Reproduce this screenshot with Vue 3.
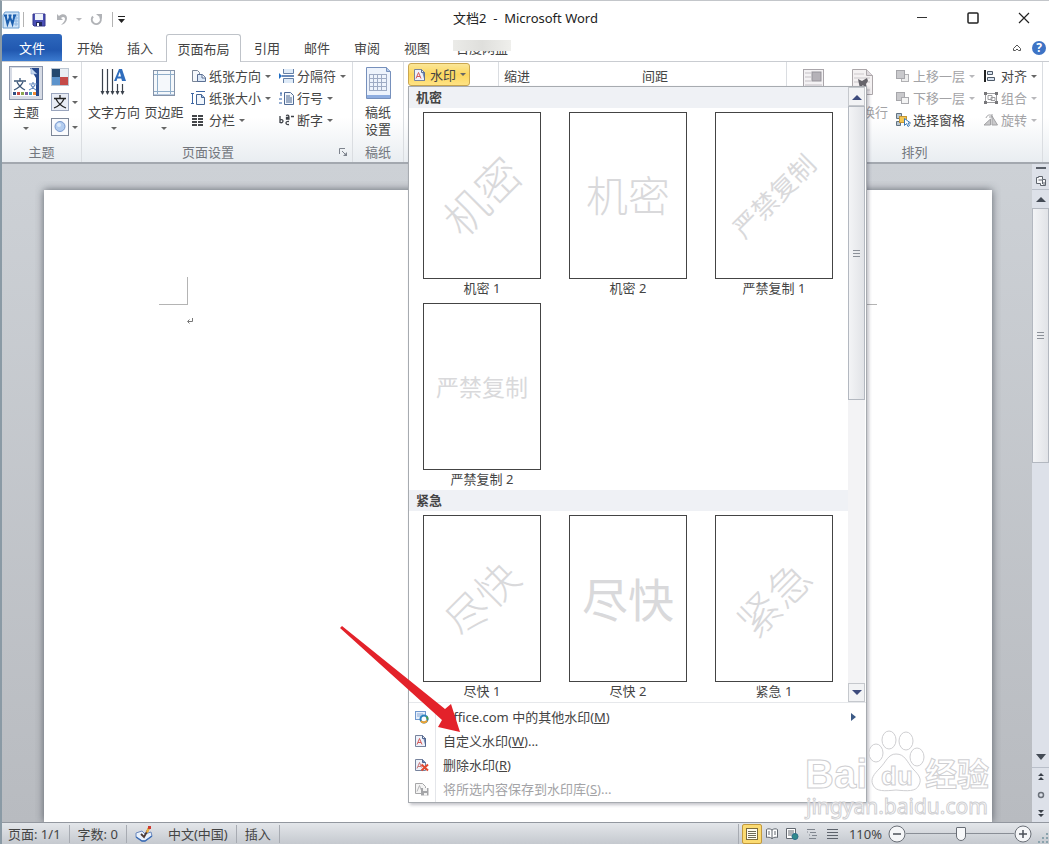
<script setup>
import { ref } from 'vue'

const zoom = ref(51)

const tabsBefore = ['开始', '插入']
const tabsAfter = ['引用', '邮件', '审阅', '视图']

const sections = [
  {
    title: '机密',
    items: [
      { name: '机密 1', text: '机密', kind: 'wide diagonal' },
      { name: '机密 2', text: '机密', kind: 'wide' },
      { name: '严禁复制 1', text: '严禁复制', kind: 'long diagonal' },
      { name: '严禁复制 2', text: '严禁复制', kind: 'long' },
    ],
  },
  {
    title: '紧急',
    items: [
      { name: '尽快 1', text: '尽快', kind: 'short diagonal' },
      { name: '尽快 2', text: '尽快', kind: 'tall' },
      { name: '紧急 1', text: '紧急', kind: 'short diagonal' },
    ],
  },
]
</script>

<template>
  <div class="window">
    <header class="titlebar">
      <div class="quick">
        <button class="plain" aria-label="Word">
          <svg width="18" height="18" viewBox="0 0 18 18">
            <path d="M3 1h14v16H1V4z" fill="#cfe3f7" stroke="#6f9fd0" />
            <path d="M14 3v12M12 4h4M12 7h4M12 10h4M12 13h4" stroke="#8db7e4" />
            <path d="M2 4.500h3M6.500 4.500h3M11 4.500h3M3.500 4.500L5.500 13 8 6l2.500 7 2-8.500" fill="none" stroke="#1d5fae" stroke-width="2" />
          </svg>
        </button>
        <i class="bar"></i>
        <button class="plain save" aria-label="保存">
          <svg width="14" height="14" viewBox="0 0 14 14">
            <path d="M1 1h12v12H2l-1-1z" fill="#4a4fb5" stroke="#34378c" />
            <rect x="3" y="1" width="8" height="6" fill="#eef3fb" />
            <rect x="4" y="9" width="6" height="4" fill="#222a5c" />
            <rect x="5" y="10" width="2" height="3" fill="#fff" />
          </svg>
        </button>
        <button class="plain undo" aria-label="撤消">
          <svg width="12" height="14" viewBox="0 0 12 14">
            <path d="M1 1v6h6L5 5c2-2 4-1 4 1 0 2-2 4-4 6 4-1 6-4 6-7 0-4-5-5-8-2z" fill="#b1b3b7" />
          </svg>
        </button>
        <i class="caret faint"></i>
        <button class="plain redo" aria-label="恢复">
          <svg width="13" height="13" viewBox="0 0 13 13">
            <path d="M3 3.500a4.500 4.500 0 1 0 7 .5" fill="none" stroke="#b1b3b7" stroke-width="2" />
            <path d="M6 1h6v5z" fill="#b1b3b7" />
          </svg>
        </button>
        <i class="bar"></i>
        <button class="plain more" aria-label="自定义快速访问工具栏">
          <svg width="7" height="8" viewBox="0 0 7 8"><path d="M0 0h7v1H0zM0 3h7L3.500 7z" fill="#222" /></svg>
        </button>
      </div>
      <div class="title">文档2&nbsp; -&nbsp; Microsoft Word</div>
      <div class="controls">
        <button aria-label="最小化"><svg width="12" height="12"><path d="M1 5.500h10" stroke="#333" stroke-width="1" /></svg></button>
        <button aria-label="最大化"><svg width="12" height="12"><rect x="1" y="1" width="10" height="10" rx="1" fill="none" stroke="#222" stroke-width="1.500" /></svg></button>
        <button aria-label="关闭"><svg width="12" height="12"><path d="M1 1l10 10M11 1L1 11" stroke="#222" stroke-width="1.200" /></svg></button>
      </div>
    </header>

    <nav class="tabs">
      <button class="file">文件</button>
      <button v-for="t in tabsBefore" :key="t" class="tab">{{ t }}</button>
      <button class="tab active">页面布局</button>
      <button v-for="t in tabsAfter" :key="t" class="tab">{{ t }}</button>
      <button class="tab covered">百度网盘</button>
      <span class="spring"></span>
      <button class="plain collapse" aria-label="功能区最小化">
        <svg width="10" height="8" viewBox="0 0 10 8"><path d="M1.500 4.500L5 1l3.500 3.500v2h-2L5 5 3.500 6.500h-2z" fill="#fff" stroke="#555" /></svg>
      </button>
      <button class="help" aria-label="帮助">?</button>
    </nav>

    <section class="ribbon">
      <div class="group theme">
        <div class="body">
          <button class="big w36">
            <svg width="34" height="34" viewBox="0 0 34 34">
              <rect x=".5" y=".5" width="33" height="33" fill="#d6dbe5" stroke="#8e98ac" />
              <rect x="3" y="2" width="25" height="28" fill="#fff" />
              <path d="M21 2h9v28h-3V12z" fill="#24478c" />
              <path d="M22 2l6 6h-6z" fill="#c5d7ef" stroke="#7b97c4" stroke-width=".5" />
              <path d="M11 12v3M5 15h12M8 16c2 4 4 6 8 8M14 16c-2 4-4 6-9 8" stroke="#3a5577" stroke-width="1.300" fill="none" />
              <path d="M24 16v2M20 18h8M22 19c1 2 3 4 5 5M26 19c-1 2-3 4-6 5" stroke="#5f86bd" stroke-width="1.200" fill="none" />
              <path d="M4 26h3v3H4z" fill="#304e83" /><path d="M8 26h3v3H8z" fill="#c44b43" />
              <path d="M12 26h3v3h-3z" fill="#8aa64f" /><path d="M16 26h3v3h-3z" fill="#7a5da0" />
              <path d="M20 26h3v3h-3z" fill="#3e9bb8" /><path d="M24 26h3v3h-3z" fill="#ef8b35" />
            </svg>
            <span>主题</span><i class="caret"></i>
          </button>
          <div class="stack">
            <button class="mini" aria-label="主题颜色">
              <svg width="18" height="18" viewBox="0 0 18 18"><rect width="18" height="18" fill="#bcc6d2" /><path d="M1 1h8v8H1z" fill="#24486f" /><path d="M9 1h8v8H9z" fill="#e9eef3" /><path d="M1 9h8v8H1z" fill="#5c93cc" /><path d="M9 9h8v8H9z" fill="#c54a48" /></svg>
              <i class="caret"></i>
            </button>
            <button class="mini" aria-label="主题字体">
              <svg width="18" height="18" viewBox="0 0 18 18"><rect x=".5" y=".5" width="17" height="17" fill="#e8ecf5" stroke="#9aa5bd" /><path d="M9 2v3M3 5.500h12M5 6c2 4 5 7 10 9M13 6c-2 4-5 7-10 9" stroke="#222" stroke-width="1.300" fill="none" /></svg>
              <i class="caret"></i>
            </button>
            <button class="mini" aria-label="主题效果">
              <svg width="18" height="18" viewBox="0 0 18 18"><rect x=".5" y=".5" width="17" height="17" fill="#fafbfd" stroke="#7d8798" /><circle cx="9" cy="8.500" r="5" fill="#b3cdf0" stroke="#7798ce" /><circle cx="8" cy="7" r="2" fill="#deebfb" /></svg>
              <i class="caret"></i>
            </button>
          </div>
        </div>
        <div class="name">主题</div>
      </div>

      <div class="group setup">
        <div class="body">
          <button class="big w56">
            <svg width="34" height="34" viewBox="0 0 34 34">
              <path d="M5.500 3v25M10.500 3v25M15.500 3v25M20.500 18v10M25.500 18v10" stroke="#3b424c" stroke-width="1.200" />
              <path d="M3.500 25l2 4 2-4zM8.500 25l2 4 2-4zM13.500 25l2 4 2-4zM18.500 25l2 4 2-4zM23.500 25l2 4 2-4z" fill="#3b424c" />
              <path d="M17 15L22 3h3l4 12h-4l-.7-2.500h-4L19.500 15zM21 10.500h3L22.800 6z" fill="#2f6dbd" fill-rule="evenodd" />
            </svg>
            <span>文字方向</span><i class="caret"></i>
          </button>
          <button class="big w44">
            <svg width="34" height="34" viewBox="0 0 34 34">
              <rect x="6.500" y="4.500" width="21" height="25" fill="#f5f8fb" stroke="#8593a8" />
              <path d="M10.500 5v24M23.500 5v24M7 8.500h20M7 25.500h20" stroke="#8fadc9" />
              <path d="M7 28h20v1H7z" fill="#b5c8df" />
            </svg>
            <span>页边距</span><i class="caret"></i>
          </button>
          <div class="rows">
            <button class="row">
              <svg width="16" height="14" viewBox="0 0 16 14"><path d="M1.500 1.500h5l2 2v9h-7z" fill="#f4f7fb" stroke="#7a8698" /><path d="M6.500 5.500h5l3 3v4h-8z" fill="#dce8f7" stroke="#5a6f93" /><path d="M11 5.500V9h3.500" fill="#fff" stroke="#5a6f93" /></svg>
              纸张方向<i class="caret"></i>
            </button>
            <button class="row">
              <svg width="16" height="14" viewBox="0 0 16 14"><path d="M1.500 2v11M0 2.500h3M0 12.500h3M5 .5h9" stroke="#3d67a5" /><path d="M5.500 3.500h5l3 3v7h-8z" fill="#f1f6fc" stroke="#466694" /><path d="M10.500 3.500v3h3" fill="#9fbbe3" stroke="#466694" /></svg>
              纸张大小<i class="caret"></i>
            </button>
            <button class="row">
              <svg width="16" height="14" viewBox="0 0 16 14"><path d="M1 3h5M7 3h5M1 6h5M7 6h5M1 9h5M7 9h5M1 12h5M7 12h5" stroke="#44464a" stroke-width="2" /></svg>
              分栏<i class="caret"></i>
            </button>
          </div>
          <div class="rows">
            <button class="row">
              <svg width="16" height="14" viewBox="0 0 16 14"><path d="M4.500 0v4.500h10V0M4.500 14V9.500h10V14" fill="#dfebf8" stroke="#6580a6" /><path d="M3 7h12" stroke="#27579b" stroke-width="1.400" /><path d="M0 4l3 3-3 3z" fill="#1f6dc4" /></svg>
              分隔符<i class="caret"></i>
            </button>
            <button class="row">
              <svg width="16" height="14" viewBox="0 0 16 14"><path d="M1 2h2M2 2v3M0 8h3M0 12h3" stroke="#2f5ea6" /><path d="M5.500 1.500h6l3 3v9h-9z" fill="#f3f7fc" stroke="#506b96" /><path d="M7 5h4M7 7h6M7 9h6M7 11h6" stroke="#49658f" /></svg>
              行号<i class="caret"></i>
            </button>
            <button class="row">
              <svg width="16" height="14" viewBox="0 0 16 14"><path d="M1 3v7M1 7c4-2 4 4 0 2.500M7 2.500c3-1 3 0 3 3.500H7.500V4.500H10M12 3.500h3M10 8.500c-4-1-4 4 0 3" fill="none" stroke="#3d4147" stroke-width="1.300" /></svg>
              断字<i class="caret"></i>
            </button>
          </div>
        </div>
        <div class="name">页面设置</div>
        <button class="plain launcher" aria-label="页面设置对话框">
          <svg width="9" height="9" viewBox="0 0 9 9"><path d="M.5 6V.5H6M3 3l4 4" fill="none" stroke="#7d838d" /><path d="M8 4v4H4z" fill="#7d838d" /></svg>
        </button>
      </div>

      <div class="group paper">
        <div class="body">
          <button class="big w44">
            <svg width="34" height="34" viewBox="0 0 34 34">
              <path d="M5.500 1.500h20l4 4v27h-24z" fill="#edf3fc" stroke="#7690bc" />
              <path d="M25.500 1.500v4h4" fill="#b4caea" stroke="#7690bc" />
              <path d="M8 8.500h18M8 12.500h18M8 16.500h18M8 20.500h18M8 24.500h18M8.500 8v17M12.500 8v17M16.500 8v17M20.500 8v17M25.500 8v17" stroke="#9eabc4" />
              <path d="M6 29h23v3H6z" fill="#8eade0" />
            </svg>
            <span>稿纸<br />设置</span>
          </button>
        </div>
        <div class="name">稿纸</div>
      </div>

      <div class="group background">
        <div class="anchor">
          <button class="mark" aria-haspopup="true" aria-expanded="true">
            <svg width="12" height="14" viewBox="0 0 12 14"><path d="M.5 1.500h7l3 3v8H.5z" fill="#eef2fa" stroke="#77839d" /><path d="M7.500 1.500v3h3v8" fill="#7189b4" stroke="#5f7194" /><path d="M2 10.500l2.500-6 2.500 6M3 8.500h3" fill="none" stroke="#d45a58" /></svg>
            水印<i class="caret"></i>
          </button>

          <div class="popup">
            <div class="gallery">
              <div class="list">
                <section v-for="s in sections" :key="s.title">
                  <h3>{{ s.title }}</h3>
                  <div class="tiles">
                    <button v-for="i in s.items" :key="i.name" class="tile">
                      <span class="sheet"><span :class="i.kind">{{ i.text }}</span></span>
                      <span class="label">{{ i.name }}</span>
                    </button>
                  </div>
                </section>
              </div>
              <div class="scroll">
                <button aria-label="向上滚动"><svg width="10" height="6"><path d="M0 6l5-5 5 5z" fill="#3c4a7c" /></svg></button>
                <div class="thumb"><i class="grip"></i></div>
                <span class="spring"></span>
                <button aria-label="向下滚动"><svg width="10" height="6"><path d="M0 0h10L5 5z" fill="#3c4a7c" /></svg></button>
              </div>
            </div>
            <div class="menu">
              <button>
                <span class="ico"><svg width="16" height="14" viewBox="0 0 16 14"><rect x="1.500" y="1.500" width="10" height="8" fill="#e5eefa" stroke="#6f97ce" /><path d="M3 4h6M3 6h4" stroke="#86a8d8" /><circle cx="10" cy="9" r="3.500" fill="#fff" stroke="#2b83bd" stroke-width="2" /><path d="M7 11a3.500 3.500 0 0 0 6-.5" fill="none" stroke="#efa32f" stroke-width="2" /><path d="M12.500 6.500a3.500 3.500 0 0 1 1 3" fill="none" stroke="#4a9c50" stroke-width="2" /></svg></span>
                <span class="txt">Office.com 中的其他水印(<u>M</u>)</span>
                <svg class="sub" width="5" height="8"><path d="M0 0l5 4-5 4z" fill="#3c5a86" /></svg>
              </button>
              <button>
                <span class="ico"><svg width="16" height="14" viewBox="0 0 16 14"><path d="M1.500 1.500h7l3 3v8h-10z" fill="#eef2fa" stroke="#77839d" /><path d="M8.500 1.500v3h3v8" fill="#7189b4" stroke="#50658f" /><path d="M3 10.500l2.500-6 2.500 6M4 8.500h3" fill="none" stroke="#d45a58" /></svg></span>
                <span class="txt">自定义水印(<u>W</u>)...</span>
              </button>
              <button>
                <span class="ico"><svg width="16" height="14" viewBox="0 0 16 14"><path d="M1.500 1.500h7l3 3v8h-10z" fill="#eef2fa" stroke="#77839d" /><path d="M8.500 1.500v3h3" fill="#7189b4" stroke="#50658f" /><path d="M3 10.500l2.500-6 2 5M4 8.500h3" fill="none" stroke="#c9797b" /><path d="M7.500 6.500l6.500 6M14 6.500l-6.500 6" stroke="#e2492f" stroke-width="2" /></svg></span>
                <span class="txt">删除水印(<u>R</u>)</span>
              </button>
              <button disabled>
                <span class="ico"><svg width="16" height="14" viewBox="0 0 16 14"><path d="M1.500 1.500h7l3 3v7h-10z" fill="#f4f4f4" stroke="#a6a6a8" /><path d="M3 9.500l2.500-6 2 5" fill="none" stroke="#b5b5b7" /><path d="M7 6h7.500v7.500H7z" fill="#a4a5a8" /><path d="M9 6h4v3H9zM10 11h3v2.500h-3z" fill="#f2f2f2" /></svg></span>
                <span class="txt">将所选内容保存到水印库(<u>S</u>)...</span>
              </button>
            </div>
          </div>
        </div>
      </div>

      <div class="group para">
        <div class="heads"><span>缩进</span><span>间距</span></div>
      </div>

      <div class="group arrange">
        <div class="body">
          <button class="big w44" disabled>
            <svg width="34" height="34" viewBox="0 0 34 34"><rect x="7.500" y="3.500" width="20" height="24" fill="#f4f2f4" stroke="#aaa6ab" /><path d="M9 7h6M9 11h6M9 15h6M9 19h17M9 23h17" stroke="#c4c0c5" /><rect x="16" y="6" width="9" height="9" fill="#b5b2b8" stroke="#96939a" /></svg>
            <span>位置</span><i class="caret"></i>
          </button>
          <button class="big w56" disabled>
            <svg width="34" height="34" viewBox="0 0 34 34"><path d="M7.500 3.500h14l6 6v19h-20z" fill="#f4f1f2" stroke="#aca7aa" /><path d="M21.500 3.500v6h6" fill="#ddd8dc" stroke="#aca7aa" /><path d="M9 8h10M9 12h16M9 16h16M9 24h16" stroke="#cbc7ca" /><path d="M13 13l4 2 5-3 1 3-2 3 1 4h-2l-2-3-3 3-1-4z" fill="#66646b" /></svg>
            <span>自动换行</span><i class="caret"></i>
          </button>
          <div class="rows">
            <button class="row" disabled>
              <svg width="16" height="14" viewBox="0 0 16 14"><rect x="6.500" y="5.500" width="7" height="7" fill="#eee" stroke="#b1b1b4" /><rect x="1.500" y="1.500" width="8" height="8" fill="#c9c9cc" stroke="#a6a6aa" /></svg>
              上移一层<i class="caret"></i>
            </button>
            <button class="row" disabled>
              <svg width="16" height="14" viewBox="0 0 16 14"><rect x="1.500" y="1.500" width="8" height="8" fill="#c9c9cc" stroke="#a6a6aa" /><rect x="6.500" y="6.500" width="7" height="6" fill="#f4f4f4" stroke="#aaaaae" /></svg>
              下移一层<i class="caret"></i>
            </button>
            <button class="row">
              <svg width="16" height="14" viewBox="0 0 16 14"><path d="M1.500.5h5v5h-5zM1.500 8.500h4v4h-4z" fill="#b9c7d3" stroke="#62727f" /><rect x="4.500" y="3.500" width="7" height="6" fill="#f4c652" stroke="#c59632" /><path d="M9.500 5.500v7l2-2 1.500 3 1.500-1-1.500-2.500h2.500z" fill="#fff" stroke="#3b7bb8" /></svg>
              选择窗格
            </button>
          </div>
          <div class="rows last">
            <button class="row">
              <svg width="16" height="14" viewBox="0 0 16 14"><path d="M2 1v12" stroke="#222" stroke-width="2" /><path d="M4.500 2.500h5v3h-5zM4.500 8.500h7v3h-7z" fill="#d8e2ee" stroke="#4d5968" /></svg>
              对齐<i class="caret"></i>
            </button>
            <button class="row" disabled>
              <svg width="16" height="14" viewBox="0 0 16 14"><path d="M2.500 2.500h11v9h-11zM5 4.500h4v4H5zM8 6.500h4v3H8z" fill="none" stroke="#9c9c9f" /><path d="M1 1h3v3H1zM12 1h3v3h-3zM1 10h3v3H1zM12 10h3v3h-3z" fill="#77777a" /></svg>
              组合<i class="caret"></i>
            </button>
            <button class="row" disabled>
              <svg width="16" height="14" viewBox="0 0 16 14"><path d="M1 12h6.500V6zM9 12V3l5.500 9z" fill="#c9c9cb" stroke="#a2a2a5" /><path d="M3 5c1-3 4-4 6-2M9 1v3H6" fill="none" stroke="#a2a2a5" /></svg>
              旋转<i class="caret"></i>
            </button>
          </div>
        </div>
        <div class="name">排列</div>
      </div>
      <div class="end"></div>
    </section>

    <main class="work">
      <div class="page">
        <i class="crop left"></i><i class="crop right"></i>
        <svg class="ret" width="8" height="8" viewBox="0 0 8 8"><path d="M6.500 1v3.500H2M3.500 2.500l-2 2 2 2" fill="none" stroke="#777" /></svg>
      </div>
      <aside class="vbar">
        <button class="split" aria-label="拆分"><svg width="10" height="2"><path d="M0 0h10v2H0z" fill="#5a6069" /></svg></button>
        <button class="ruler" aria-label="标尺"><svg width="12" height="12" viewBox="0 0 12 12"><path d="M1.500 8.500v-6h2v-1h4v3h3v6h-5v-2z" fill="#f6f7f9" stroke="#5f656e" /><path d="M3.500 5h4v4M9 7v4" fill="none" stroke="#5f656e" /></svg></button>
        <button class="up" aria-label="向上"><svg width="10" height="6"><path d="M0 6l5-5 5 5z" fill="#444b55" /></svg></button>
        <div class="vthumb"><i class="grip"></i></div>
        <span class="spring"></span>
        <button class="down" aria-label="向下"><svg width="10" height="6"><path d="M0 0h10L5 6z" fill="#444b55" /></svg></button>
        <button class="nav" aria-label="前一页"><svg width="6" height="8"><path d="M0 3l3-3 3 3zM0 7l3-3 3 3z" fill="#3a4049" /></svg></button>
        <button class="nav" aria-label="选择浏览对象"><svg width="8" height="8"><circle cx="4" cy="4" r="2.500" fill="none" stroke="#6b717a" stroke-width="1.500" /></svg></button>
        <button class="nav" aria-label="下一页"><svg width="6" height="8"><path d="M0 1h6L3 4zM0 5h6L3 8z" fill="#3a4049" /></svg></button>
      </aside>

      <svg class="brand" width="192" height="92" viewBox="0 0 192 92">
        <g fill="#fff" fill-opacity=".9" stroke="#cfcfd2" stroke-width="1">
          <text x="3" y="58" font-size="40" font-weight="700" class="bai">Bai</text>
          <ellipse cx="74" cy="23" rx="7" ry="9" /><ellipse cx="87" cy="10" rx="7" ry="9" />
          <ellipse cx="104" cy="11" rx="7" ry="9" /><ellipse cx="115" cy="27" rx="7" ry="9" />
          <path d="M94 24c9 0 11 8 17 15 6 6 9 10 6 16-3 7-12 6-23 5-11 1-20 2-23-5-3-6 1-11 7-17 6-6 8-14 16-14z" />
          <text x="79" y="55" font-size="26" font-weight="700" class="bai">du</text>
          <text x="123" y="56" font-size="32" font-weight="700">经验</text>
          <text x="4" y="84" font-size="21" class="site">jingyan.baidu.com</text>
        </g>
      </svg>
    </main>

    <footer class="status">
      <button>页面: 1/1</button>
      <button>字数: 0</button>
      <button class="proof" aria-label="校对">
        <svg width="20" height="18" viewBox="0 0 20 18"><path d="M2 8l6-2 3 3 6-2 1 4-7 5H8l-6-4z" fill="#e9f1fb" stroke="#6b88bd" /><path d="M2 12l6 4h3l7-5" fill="none" stroke="#3d6db5" stroke-width="1.500" /><path d="M7 9l3 3 5-9" fill="none" stroke="#4d3b34" stroke-width="1.800" /><path d="M12 7l2-5 2 1-2 5z" fill="#eeaf3f" /><path d="M14 1h3v3h-3z" fill="#ce3b32" /></svg>
      </button>
      <button>中文(中国)</button>
      <button>插入</button>
      <span class="spring"></span>
      <div class="views">
        <button class="on" aria-label="页面视图"><svg width="14" height="12"><rect x="1.500" y=".5" width="11" height="11" fill="#fffdf1" stroke="#7c6b3c" /><path d="M3 3.500h8M3 5.500h8M3 7.500h8M3 9.500h8" stroke="#6d6a58" /></svg></button>
        <button aria-label="阅读版式"><svg width="14" height="12"><path d="M7 2C5 .5 3 .5 1.500 1.500v8C3 9 5 9 7 10.500 9 9 11 9 12.500 9.500v-8C11 .5 9 .5 7 2v9" fill="#fff" stroke="#626870" /><path d="M3 4h2M3 6h2M9 4h2M9 6h2" stroke="#626870" /></svg></button>
        <button aria-label="Web 版式"><svg width="14" height="12"><path d="M1.500.5h9v10h-9z" fill="#fff" stroke="#626870" /><path d="M3 3h6M3 5h6M3 7h4" stroke="#626870" /><circle cx="10" cy="8.500" r="3" fill="#328a8a" stroke="#2b6f8d" /></svg></button>
        <button aria-label="大纲"><svg width="14" height="12"><path d="M2 1.500h8M5 4.500h6M7 7.500h5M4 10.500h7" stroke="#80868f" /><path d="M2 4h1M4 7h1" stroke="#80868f" /></svg></button>
        <button aria-label="草稿"><svg width="14" height="12"><path d="M2 1.500h11M2 4.500h11M2 7.500h11M2 10.500h11" stroke="#5d636c" /></svg></button>
      </div>
      <button class="pct">110%</button>
      <button class="round" aria-label="缩小"><svg width="18" height="18"><circle cx="9" cy="9" r="8" fill="#f5f6f8" stroke="#6b7078" /><path d="M5 9h8" stroke="#4b5058" stroke-width="1.500" /></svg></button>
      <input v-model="zoom" type="range" min="0" max="100" aria-label="显示比例" />
      <button class="round" aria-label="放大"><svg width="18" height="18"><circle cx="9" cy="9" r="8" fill="#f5f6f8" stroke="#6b7078" /><path d="M5 9h8M9 5v8" stroke="#4b5058" stroke-width="1.500" /></svg></button>
      <svg class="size" width="12" height="12"><path d="M9 1h2v2H9zM5 5h2v2H5zM9 5h2v2H9zM1 9h2v2H1zM5 9h2v2H5zM9 9h2v2H9z" fill="#8aa3ad" /></svg>
    </footer>

    <svg class="arrow" width="124" height="112" viewBox="0 0 124 112"><path d="M2 0l103 83 6-5 9 28-22-5 4-7L0 2z" fill="#e3222a" /></svg>
  </div>
</template>

<style>
body { background: #fff; }
</style>

<style scoped>
.window {
  position: relative; display: flex; flex-direction: column; min-height: 100vh; box-sizing: border-box;
  border-left: 2px solid #8a9aa5; border-top: 1px solid #c3c6ca; background: #fff; overflow: hidden;
  font: 13px/16px "Noto Sans", "Noto Sans CJK SC", sans-serif; color: #444;
}
button { font: inherit; color: inherit; border: 0; padding: 0; margin: 0; background: none; display: flex; align-items: center; white-space: nowrap; }
svg { display: block; flex: none; }
.spring { flex: 1; }
.caret { flex: none; width: 0; height: 0; border: 3px solid transparent; border-top: 3px solid #666; border-bottom: 0; }
.faint, button:disabled .caret { border-top-color: #b8b8bb; }
button:disabled { color: #a3a3a6; }

.titlebar { display: grid; grid-template-columns: 1fr auto 1fr; height: 33px; align-items: center; }
.quick { display: flex; align-items: center; padding-top: 4px; }
.bar { width: 1px; height: 15px; background: #b3b3b3; margin: 0 3px; }
.save { margin-left: 5px; }
.undo { margin: 0 8px 0 10px; }
.redo { margin: 0 6px 0 8px; }
.more { margin-left: 2px; }
.title { color: #222; }
.controls { display: flex; justify-content: flex-end; }
.controls button { width: 51px; height: 32px; justify-content: center; }

.tabs { display: flex; height: 28px; align-items: flex-end; border-bottom: 1px solid #c9ccd1; box-sizing: border-box; }
.tabs .tab { width: 50px; height: 27px; justify-content: center; }
.tabs .file { width: 60px; height: 27px; margin-right: 3px; justify-content: center; color: #fff; border-radius: 3px 3px 0 0; background: linear-gradient(#2e68bd, #2158b0 60%, #3c7bd0); }
.tabs .active { width: 75px; height: 28px; margin: 0 1px -1px; border: 1px solid #bfc3c9; border-bottom: 0; border-radius: 3px 3px 0 0; background: #fff; }
.tabs .covered { position: relative; width: 60px; margin-left: 10px; }
.covered::after { content: ""; position: absolute; left: 1px; right: 1px; top: 6px; height: 11px; background: linear-gradient(90deg, #ebebe8, #dfdfdc 50%, #efefec); }
.collapse { height: 26px; margin-right: 10px; }
.help { width: 14px; height: 14px; margin: 0 3px 6px 0; justify-content: center; border-radius: 50%; background: #3d73c5; color: #fff; font-size: 12px; font-weight: 700; }

.ribbon { position: relative; z-index: 2; display: flex; height: 102px; box-sizing: border-box; border-bottom: 2px solid #a3a8af; background: linear-gradient(#fff 55%, #e9edf1); }
.group { position: relative; box-sizing: border-box; display: flex; flex-direction: column; border-right: 1px solid #dadde1; }
.body { display: flex; flex: 1; }
.name { text-align: center; height: 20px; line-height: 20px; color: #73777e; }
.theme { width: 80px; }
.setup { width: 271px; }
.setup .name { padding-right: 18px; }
.paper { width: 51px; }
.background { width: 95px; z-index: 2; }
.para { flex: 1; }
.arrange { width: 256px; }
.end { width: 6px; }
.big { flex-direction: column; padding-top: 4px; line-height: 17px; }
.big span { margin-top: 4px; }
.big .caret { margin-top: 6px; }
.w36 { width: 34px; margin-left: 7px; }
.w56 { width: 56px; margin-left: 4px; }
.w44 { width: 44px; margin-left: 1px; }
.paper .w44 { margin-left: 3px; }
.stack { display: flex; flex-direction: column; gap: 7px; padding: 6px 0 0 8px; }
.mini { gap: 3px; }
.rows { display: flex; flex-direction: column; padding-top: 3px; margin-left: 4px; }
.row { height: 22px; gap: 4px; padding-right: 3px; }
.row svg { margin-right: -2px; }
.setup .rows { margin-left: 5px; }
.setup .w44 { margin-left: 0; }
.launcher { position: absolute; right: 4px; bottom: 5px; }
.heads { display: flex; padding: 6px 0 0 5px; }
.heads span { width: 138px; }
.arrange .w44 { margin-left: 4px; }
.arrange .w56 { margin-left: -1px; }
.arrange .rows { margin-left: 5px; }

.anchor { position: relative; margin: 1px 0 0 4px; }
.mark { width: 62px; height: 23px; box-sizing: border-box; padding-left: 5px; gap: 4px; border: 1px solid #c9a650; border-radius: 3px; background: linear-gradient(#fbe697, #fbd65e 50%, #ffe383); }
.popup { position: absolute; left: 0; top: 23px; width: 459px; box-sizing: border-box; border: 1px solid #a7abb0; background: #fff; box-shadow: 2px 2px 3px rgba(60, 60, 80, .3); }
.gallery { display: flex; border-bottom: 1px solid #e6e8eb; }
.list { flex: 1; }
h3 { margin: 0; height: 21px; padding-left: 7px; font-size: 13px; line-height: 21px; background: #eff1f5; }
.tiles { display: grid; grid-template-columns: repeat(3, 118px); gap: 4px 28px; padding: 4px 0 0 14px; }
.tile { flex-direction: column; }
.sheet { width: 118px; height: 167px; box-sizing: border-box; border: 1px solid #444; display: flex; align-items: center; justify-content: center; overflow: hidden; color: #d9d9db; }
.label { height: 20px; line-height: 18px; }
.diagonal { transform: rotate(-45deg); }
.wide { font-size: 42px; font-weight: 300; }
.wide.diagonal { font-size: 44px; }
.long { font-size: 23px; }
.long.diagonal { font-size: 26px; }
.short { font-size: 42px; font-weight: 300; }
.tall { font-size: 46px; }
.scroll { width: 17px; display: flex; flex-direction: column; background: #f3f3f5; margin-right: 1px; }
.scroll button { height: 19px; justify-content: center; border: 1px solid #c5c8cd; background: #f2f3f5; box-sizing: border-box; }
.thumb, .vthumb { display: flex; align-items: center; justify-content: center; box-sizing: border-box; border: 1px solid #b3b8c0; background: linear-gradient(90deg, #f3f4f6, #e1e3e7); }
.thumb { height: 294px; }
.grip { width: 7px; height: 7px; background: repeating-linear-gradient(#8c9199 0 1px, transparent 1px 3px); }
.menu { padding: 2px 0 1px; background: linear-gradient(90deg, #fff 26px, #e4e6ea 26px, #e4e6ea 27px, #fff 27px); }
.menu button { width: 100%; height: 24px; padding-right: 10px; }
.ico { box-sizing: border-box; width: 28px; margin-right: 6px; padding-left: 5px; }
.txt { flex: 1; text-align: left; }

.work { position: relative; flex: 1; display: flex; background: linear-gradient(#cdd1d6, #b8bbc0); }
.page { position: relative; flex: 1; margin: 26px 40px 0 42px; background: #fff; box-shadow: 0 0 8px rgba(50, 55, 65, .7); clip-path: inset(-9px -9px 0 -9px); }
.crop { position: absolute; top: 87px; width: 28px; height: 27px; border-bottom: 1px solid #b4b4b4; }
.crop.left { left: 115px; border-right: 1px solid #b4b4b4; }
.crop.right { right: 115px; border-left: 1px solid #b4b4b4; }
.ret { position: absolute; left: 142px; top: 127px; }
.vbar { width: 17px; display: flex; flex-direction: column; align-items: stretch; background: #dde1e9; }
.vbar button { justify-content: center; }
.split { height: 8px; }
.ruler { height: 18px; border-bottom: 1px solid #b9bfc9; }
.up { height: 18px; }
.down { height: 21px; border-bottom: 1px solid #b9bfc9; }
.vthumb { height: 255px; }
.nav { height: 18px; }
.brand { position: absolute; z-index: 3; right: 55px; bottom: 0; font-family: "Noto Sans", "Noto Sans CJK SC", sans-serif; }
.bai { font-family: "Liberation Sans", sans-serif; }

.status { position: relative; display: flex; align-items: center; height: 22px; box-sizing: border-box; border-top: 1px solid #92979f; background: linear-gradient(#e3e6ea, #c5c9cf); }
.status > button { height: 18px; padding: 0 8px; border-right: 1px solid #a7abb2; }
.status > button:first-child { padding-left: 6px; }
.status > .proof { padding: 0 6px 0 7px; border: 0; }
.views { display: flex; border-left: 1px solid #a7abb2; padding-left: 3px; }
.views button { width: 20px; height: 20px; justify-content: center; box-sizing: border-box; }
.views .on { border: 1px solid #c49a3c; border-radius: 2px; background: #fbdb72; }
.status > .pct { padding: 0 6px 0 7px; border: 0; }
.status > .round { padding: 0; border: 0; }
input { appearance: none; width: 108px; height: 18px; margin: 0; background: linear-gradient(transparent 8px, #898e96 8px, #898e96 9px, transparent 9px); }
input::-webkit-slider-thumb { appearance: none; width: 10px; height: 14px; border: 1px solid #686d75; border-radius: 1px 1px 5px 5px; background: #f7f8fa; }
.size { align-self: flex-end; margin-left: 5px; }

.arrow { position: absolute; z-index: 5; left: 338px; top: 625px; }
</style>
